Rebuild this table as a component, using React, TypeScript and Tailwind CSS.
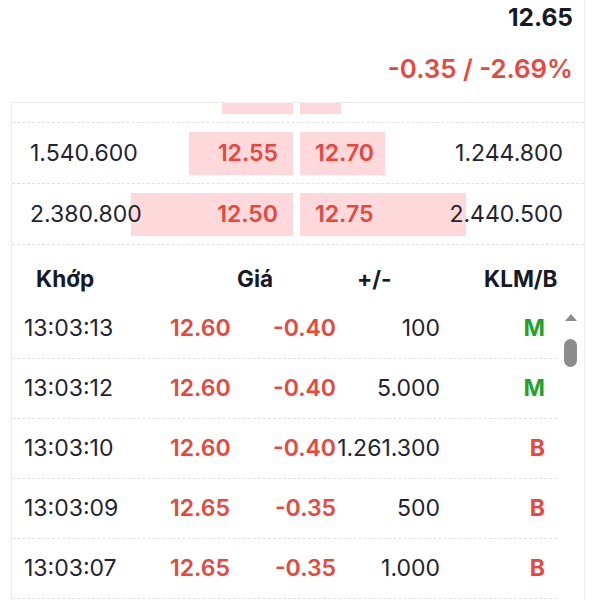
const bookRows = [
  { bidVol: '', bid: '', ask: '', askVol: '', bidW: 71, askW: 41 },
  { bidVol: '1.540.600', bid: '12.55', ask: '12.70', askVol: '1.244.800', bidW: 104, askW: 85 },
  { bidVol: '2.380.800', bid: '12.50', ask: '12.75', askVol: '2.440.500', bidW: 162, askW: 166 },
];

const trades = [
  { time: '13:03:13', price: '12.60', change: '-0.40', vol: '100', side: 'M' },
  { time: '13:03:12', price: '12.60', change: '-0.40', vol: '5.000', side: 'M' },
  { time: '13:03:10', price: '12.60', change: '-0.40', vol: '1.261.300', side: 'B' },
  { time: '13:03:09', price: '12.65', change: '-0.35', vol: '500', side: 'B' },
  { time: '13:03:07', price: '12.65', change: '-0.35', vol: '1.000', side: 'B' },
];

export default function App() {
  return (
    <div
      className="w-[600px] h-[600px] bg-white overflow-hidden flex text-[#1f2430]"
      style={{ fontFamily: 'Inter, "Noto Sans", sans-serif' }}
    >
      <div className="w-[585px] h-full border-r border-[#ececec] flex flex-col">
        {/* Price header */}
        <div className="h-[102px] flex flex-col items-end pr-[11px]">
          <div className="mt-[2px] text-[24.5px] leading-[30px] font-bold text-[#151a26]">12.65</div>
          <div className="mt-[22px] text-[25.8px] leading-[30px] font-semibold text-[#e9473d]">
            -0.35 / -2.69%
          </div>
        </div>

        <div className="ml-[11px] flex-1 border-l border-t border-[#ececec] flex flex-col">
          {/* Order book */}
          <div className="h-[142px] overflow-hidden flex flex-col justify-end">
            {bookRows.map((r, i) => (
              <div
                key={i}
                className="h-[61px] shrink-0 flex items-center border-b border-dashed border-[#e2e2e2] text-[23px]"
              >
                <div className="relative w-[281px] h-[43px] flex items-center justify-between">
                  <div className="absolute right-0 top-0 h-full bg-[#fdd9db]" style={{ width: r.bidW }} />
                  <span className="relative pl-[18px]">{r.bidVol}</span>
                  <span className="relative pr-[15px] font-semibold text-[#e9473d]">{r.bid}</span>
                </div>
                <div className="w-[7px]" />
                <div className="relative flex-1 h-[43px] flex items-center justify-between">
                  <div className="absolute left-0 top-0 h-full bg-[#fdd9db]" style={{ width: r.askW }} />
                  <span className="relative pl-[15px] font-semibold text-[#e9473d]">{r.ask}</span>
                  <span className="relative pr-[21px]">{r.askVol}</span>
                </div>
              </div>
            ))}
          </div>

          {/* Trades header */}
          <div className="h-[54px] shrink-0 flex items-center pt-[14px] text-[22.5px] font-bold text-[#151a26]">
            <span className="w-[225px] pl-[24px]">Khớp</span>
            <span className="w-[120px]">Giá</span>
            <span className="w-[127px]">+/-</span>
            <span>KLM/B</span>
          </div>

          {/* Trades list */}
          <div className="flex-1 flex overflow-hidden">
            <div className="w-[545px] flex flex-col">
              {trades.map((t, i) => (
                <div
                  key={i}
                  className="h-[60px] shrink-0 flex items-center border-b border-dashed border-[#e2e2e2] text-[23px] whitespace-nowrap"
                >
                  <span className="w-[158px] pl-[12px]">{t.time}</span>
                  <span className="w-[100px] font-semibold text-[#e9473d]">{t.price}</span>
                  <span className="w-[66px] text-right font-semibold text-[#e9473d]">{t.change}</span>
                  <span className="w-[104px] text-right">{t.vol}</span>
                  <span
                    className={
                      'flex-1 text-right pr-[12px] font-bold ' +
                      (t.side === 'M' ? 'text-[#1fa32a]' : 'text-[#e9473d]')
                    }
                  >
                    {t.side}
                  </span>
                </div>
              ))}
            </div>
            <div className="flex-1 flex flex-col items-center pt-[15px]">
              <svg width="12" height="7" viewBox="0 0 12 7">
                <path d="M6 0 L12 7 L0 7 Z" fill="#8d8d8d" />
              </svg>
              <div className="mt-[18px] w-[13px] h-[28px] rounded-full bg-[#8d8d8d]" />
            </div>
          </div>
        </div>
      </div>
    </div>
  );
}
